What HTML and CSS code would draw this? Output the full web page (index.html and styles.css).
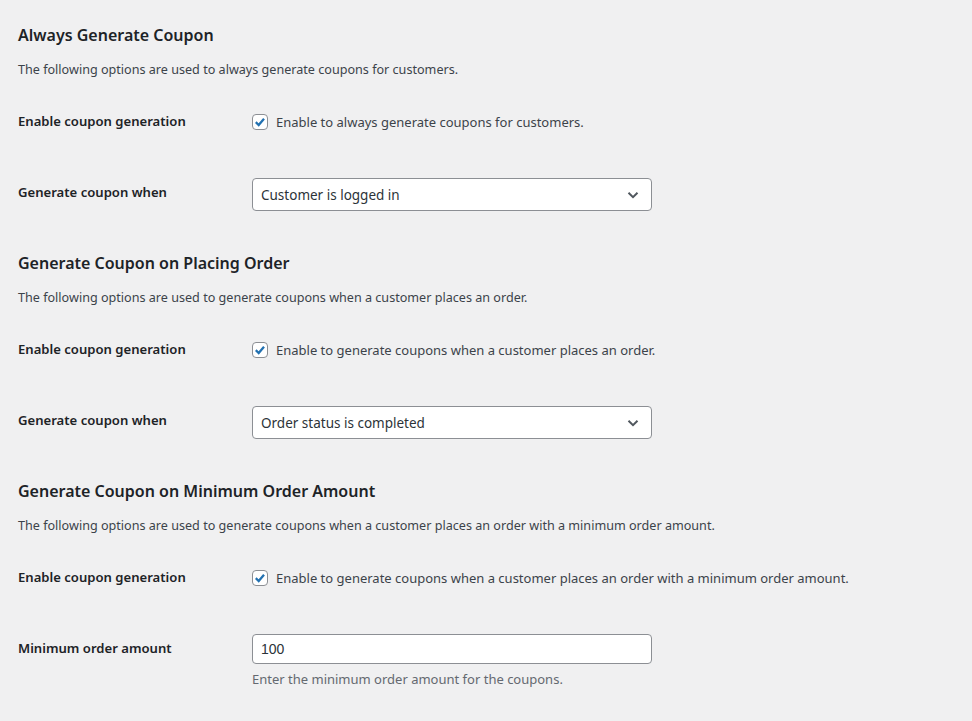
FILE: index.html
```html
<!DOCTYPE html>
<html lang="en">
<head>
  <meta charset="UTF-8">
  <title>Coupon Settings</title>
  <link rel="stylesheet" href="styles.css">
</head>
<body>

  <div class="wrap">

    <section class="secao">
      <h2>Always Generate Coupon</h2>
      <p class="intro">The following options are used to always generate coupons for customers.</p>
      <div class="linha linha-check">
        <div class="rotulo">Enable coupon generation</div>
        <label class="campo">
          <span class="caixa"><svg viewBox="0 0 16 16"><path d="M3.2 8.2 6.5 11.4 12.6 4.2"/></svg></span>
          Enable to always generate coupons for customers.
        </label>
      </div>
      <div class="linha linha-select">
        <div class="rotulo">Generate coupon when</div>
        <div class="campo">
          <div class="select">Customer is logged in
            <svg viewBox="0 0 12 8"><path d="M1.5 1.8 6 6.2 10.5 1.8"/></svg>
          </div>
        </div>
      </div>
    </section>

    <section class="secao">
      <h2>Generate Coupon on Placing Order</h2>
      <p class="intro">The following options are used to generate coupons when a customer places an order.</p>
      <div class="linha linha-check">
        <div class="rotulo">Enable coupon generation</div>
        <label class="campo">
          <span class="caixa"><svg viewBox="0 0 16 16"><path d="M3.2 8.2 6.5 11.4 12.6 4.2"/></svg></span>
          Enable to generate coupons when a customer places an order.
        </label>
      </div>
      <div class="linha linha-select">
        <div class="rotulo">Generate coupon when</div>
        <div class="campo">
          <div class="select">Order status is completed
            <svg viewBox="0 0 12 8"><path d="M1.5 1.8 6 6.2 10.5 1.8"/></svg>
          </div>
        </div>
      </div>
    </section>

    <section class="secao">
      <h2>Generate Coupon on Minimum Order Amount</h2>
      <p class="intro">The following options are used to generate coupons when a customer places an order with a minimum order amount.</p>
      <div class="linha linha-check">
        <div class="rotulo">Enable coupon generation</div>
        <label class="campo">
          <span class="caixa"><svg viewBox="0 0 16 16"><path d="M3.2 8.2 6.5 11.4 12.6 4.2"/></svg></span>
          Enable to generate coupons when a customer places an order with a minimum order amount.
        </label>
      </div>
      <div class="linha linha-input">
        <div class="rotulo">Minimum order amount</div>
        <div class="campo coluna">
          <div class="input">100</div>
          <p class="ajuda">Enter the minimum order amount for the coupons.</p>
        </div>
      </div>
    </section>

  </div>

</body>
</html>
```

FILE: styles.css
```css
* { box-sizing: border-box; margin: 0; padding: 0; }

body {
  font-family: "Noto Sans", "Open Sans", sans-serif;
  font-size: 13px;
  color: #3c434a;
  background-color: #f0f0f1;
  min-height: 100vh;
}

.wrap {
  padding: 0 18px;
}

.secao {
  height: 228px;
  padding-top: 24px;
}

h2 {
  font-size: 16px;
  font-weight: 600;
  line-height: 22px;
  color: #1d2327;
}

.intro {
  margin-top: 14px;
  line-height: 20px;
  font-size: 12.6px;
}

.linha {
  display: flex;
}

.linha-check {
  margin-top: 12px;
  height: 71px;
}

.linha-select,
.linha-input {
  height: 65px;
}

.rotulo {
  width: 234px;
  padding-top: 20px;
  font-size: 13.1px;
  font-weight: 600;
  line-height: 18px;
  color: #1d2327;
}

.campo {
  display: flex;
  align-items: center;
  gap: 8px;
  padding-top: 15px;
  align-self: flex-start;
}

.linha-check .campo {
  padding-top: 22px;
  line-height: 16px;
  font-size: 13px;
}

.caixa {
  width: 16px;
  height: 16px;
  border: 1px solid #8c8f94;
  border-radius: 4px;
  background: white;
  display: flex;
}

.caixa svg {
  width: 14px;
  height: 14px;
  fill: none;
  stroke: #2271b1;
  stroke-width: 2.6;
}

.select {
  width: 400px;
  height: 33px;
  background: white;
  border: 1px solid #8c8f94;
  border-radius: 4px;
  padding: 0 12px 0 8px;
  display: flex;
  align-items: center;
  justify-content: space-between;
  font-size: 13.5px;
  color: #2c3338;
}

.select svg {
  width: 12px;
  height: 8px;
  fill: none;
  stroke: #50575e;
  stroke-width: 2;
}

.coluna {
  flex-direction: column;
  align-items: flex-start;
  gap: 0;
}

.input {
  width: 400px;
  height: 30px;
  background: white;
  border: 1px solid #8c8f94;
  border-radius: 4px;
  padding: 0 8px;
  display: flex;
  align-items: center;
  font-family: "Liberation Sans", Arial, sans-serif;
  font-size: 14px;
  color: #2c3338;
}

.ajuda {
  margin-top: 5px;
  line-height: 20px;
  font-size: 13px;
  color: #646970;
}
```
